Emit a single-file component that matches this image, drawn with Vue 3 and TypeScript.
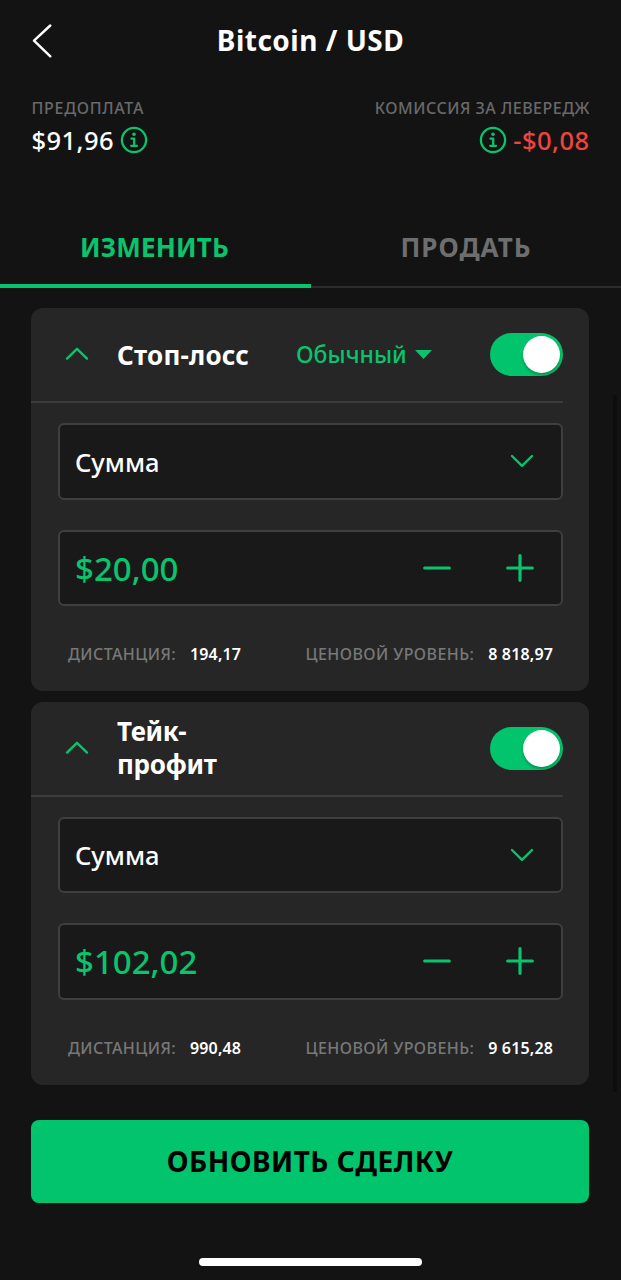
<script setup lang="ts">
import { ref } from 'vue'

interface Limit {
  id: string
  title: string
  mode?: string
  amount: string
  distance: string
  level: string
  enabled: boolean
}

const limits = ref<Limit[]>([
  { id: 'stop', title: 'Стоп-лосс', mode: 'Обычный', amount: '$20,00', distance: '194,17', level: '8 818,97', enabled: true },
  { id: 'take', title: 'Тейк-профит', amount: '$102,02', distance: '990,48', level: '9 615,28', enabled: true },
])
</script>

<template>
  <main class="screen">
    <header class="topbar">
      <svg class="back" width="20" height="34" viewBox="0 0 20 34"><path d="M18.3 1.5 2 16.7 18.3 32.3" /></svg>
      <h1>Bitcoin / USD</h1>
    </header>

    <section class="summary">
      <div>
        <div class="label wide">ПРЕДОПЛАТА</div>
        <div class="value">
          <span>$91,96</span>
          <svg class="info" width="28" height="28" viewBox="0 0 28 28"><circle cx="14" cy="14" r="12.1" /><circle class="dot" cx="14" cy="8.3" r="1.8" /><path d="M11.4 12.6h2.8v7M11.2 19.8h5.8" /></svg>
        </div>
      </div>
      <div class="right">
        <div class="label">КОМИССИЯ ЗА ЛЕВЕРЕДЖ</div>
        <div class="value loss">
          <svg class="info" width="28" height="28" viewBox="0 0 28 28"><circle cx="14" cy="14" r="12.1" /><circle class="dot" cx="14" cy="8.3" r="1.8" /><path d="M11.4 12.6h2.8v7M11.2 19.8h5.8" /></svg>
          <span>-$0,08</span>
        </div>
      </div>
    </section>

    <nav class="tabs">
      <button class="tab active">ИЗМЕНИТЬ</button>
      <button class="tab">ПРОДАТЬ</button>
    </nav>

    <section class="cards">
      <article v-for="item in limits" :key="item.id" class="card">
        <div class="card-head">
          <svg class="chev" width="24" height="14" viewBox="0 0 24 14"><path d="M2 11.6 12 1.8 22 11.6" /></svg>
          <h2 :class="{ narrow: !item.mode }"><span>{{ item.title }}</span></h2>
          <div v-if="item.mode" class="mode">
            <span>{{ item.mode }}</span>
            <svg width="17" height="9" viewBox="0 0 17 9"><path d="M0 0h17L8.5 9z" /></svg>
          </div>
          <button class="toggle" :class="{ on: item.enabled }" @click="item.enabled = !item.enabled"><i></i></button>
        </div>
        <div class="card-body">
          <div class="field">
            <span>Сумма</span>
            <svg class="chev" width="24" height="14" viewBox="0 0 24 14"><path d="M2 2 12 11.8 22 2" /></svg>
          </div>
          <div class="field amount">
            <span>{{ item.amount }}</span>
            <div class="steps">
              <svg width="28" height="28" viewBox="0 0 28 28"><path d="M1.7 14h24.6" /></svg>
              <svg width="28" height="28" viewBox="0 0 28 28"><path d="M1.7 14h24.6M14 1.7v24.6" /></svg>
            </div>
          </div>
          <div class="stats">
            <span class="key">ДИСТАНЦИЯ:</span><b>{{ item.distance }}</b>
            <span class="key level">ЦЕНОВОЙ УРОВЕНЬ:</span><b>{{ item.level }}</b>
          </div>
        </div>
      </article>
    </section>

    <button class="submit">ОБНОВИТЬ СДЕЛКУ</button>
    <div class="home"></div>
    <div class="scrollbar"></div>
  </main>
</template>

<style>
body { margin: 0; background: #131313; }
</style>

<style scoped>
* { box-sizing: border-box; }
.screen {
  position: relative;
  width: 621px;
  height: 1280px;
  overflow: hidden;
  display: flex;
  flex-direction: column;
  background: #131313;
  color: #fff;
  font-family: "Noto Sans", "Open Sans", sans-serif;
}
button { border: 0; padding: 0; margin: 0; background: none; font: inherit; color: inherit; }
svg { flex: none; display: block; fill: none; stroke: #09c46d; stroke-width: 2.4; stroke-linecap: round; stroke-linejoin: round; }
span, b { white-space: nowrap; }
.topbar { display: grid; grid-template-columns: 64px 1fr 64px; align-items: center; height: 81px; }
.back { margin-left: 32px; stroke: #fff; stroke-width: 2.4; }
h1 { margin: -2px 0 0; text-align: center; font-size: 28px; line-height: 34px; font-weight: 700; letter-spacing: .5px; }
.summary { display: flex; justify-content: space-between; height: 125px; padding: 15px 31.5px 0; }
.label { font-size: 16px; line-height: 24px; font-weight: 500; color: #696969; letter-spacing: .5px; margin-right: -.5px; }
.label.wide { letter-spacing: .7px; }
.value { display: flex; align-items: center; gap: 6px; height: 39px; font-size: 25.5px; font-weight: 500; letter-spacing: .45px; }
.value span { padding-top: 1px; }
.right .value { justify-content: flex-end; }
.loss { color: #f0443e; }
.info { stroke-width: 2.3; }
.dot { fill: #09c46d; stroke: none; }
.tabs { display: flex; height: 82px; }
.tab { flex: 1; height: 82px; box-shadow: inset 0 -2px #2c2c2c; font-size: 26px; font-weight: 700; letter-spacing: 1px; color: #6e6e6e; }
.tab.active { flex: 0 0 311px; box-shadow: inset 0 -4px #09c46d; color: #09c46d; letter-spacing: .2px; padding-right: 2px; }
.cards { display: flex; flex-direction: column; gap: 10.5px; padding: 20px 32px 0 31px; }
.card { height: 383px; border-radius: 12px; background: #262626; }
.card-head { display: flex; align-items: center; height: 95px; margin-right: 26px; padding-left: 34px; border-bottom: 2px solid #3b3b3b; }
.card-head .chev { margin-bottom: 1px; }
h2 { width: 179px; margin: 0 0 0 28px; font-size: 26px; line-height: 33px; font-weight: 700; letter-spacing: .2px; padding-top: 2px; }
h2.narrow { padding-top: 0; }
h2.narrow span { display: block; width: 110px; white-space: normal; letter-spacing: -.3px; }
.mode { display: flex; align-items: center; gap: 8px; color: #09c46d; font-size: 23px; font-weight: 500; }
.mode span { margin-top: -1px; }
.mode svg { fill: #09c46d; stroke: none; }
.toggle { width: 73px; height: 43px; margin-left: auto; border-radius: 22px; background: #444; }
.toggle.on { background: #02c46c; }
.toggle i { display: block; width: 37px; height: 37px; margin-left: 3px; border-radius: 50%; background: #fff; box-shadow: 0 2px 3px rgba(0, 0, 0, .25); }
.toggle.on i { margin-left: 33px; }
.card-body { padding: 20px 26px 0 27px; }
.field { display: flex; align-items: center; justify-content: space-between; height: 76.5px; padding: 0 27px 0 15px; border: 2px solid #3f3f3f; border-radius: 6px; background: #191919; font-size: 25.5px; font-weight: 500; }
.field span { margin-top: 1px; }
.amount { margin-top: 30px; color: #09c46d; font-size: 33px; }
.steps { display: flex; gap: 55px; }
.steps svg { stroke-width: 3.2; }
.stats { display: flex; align-items: center; height: 24px; margin-top: 36px; padding: 0 10px; font-size: 16px; }
.key { color: #787878; font-weight: 500; letter-spacing: .42px; }
.stats b { margin-left: 14px; font-weight: 600; letter-spacing: .15px; }
.level { margin-left: auto; }
.submit { height: 83px; margin: 35.5px 32px 0 31px; border-radius: 8px; background: #02c46c; color: #000; font-size: 28px; line-height: 80px; padding-bottom: 2px; font-weight: 700; letter-spacing: .5px; }
.home { width: 223px; height: 8px; margin: 55px auto 0; border-radius: 4px; background: #fff; }
.scrollbar { position: absolute; top: 395px; right: 4px; width: 4px; height: 697px; border-radius: 2px; background: #0d0d0d; }
</style>
